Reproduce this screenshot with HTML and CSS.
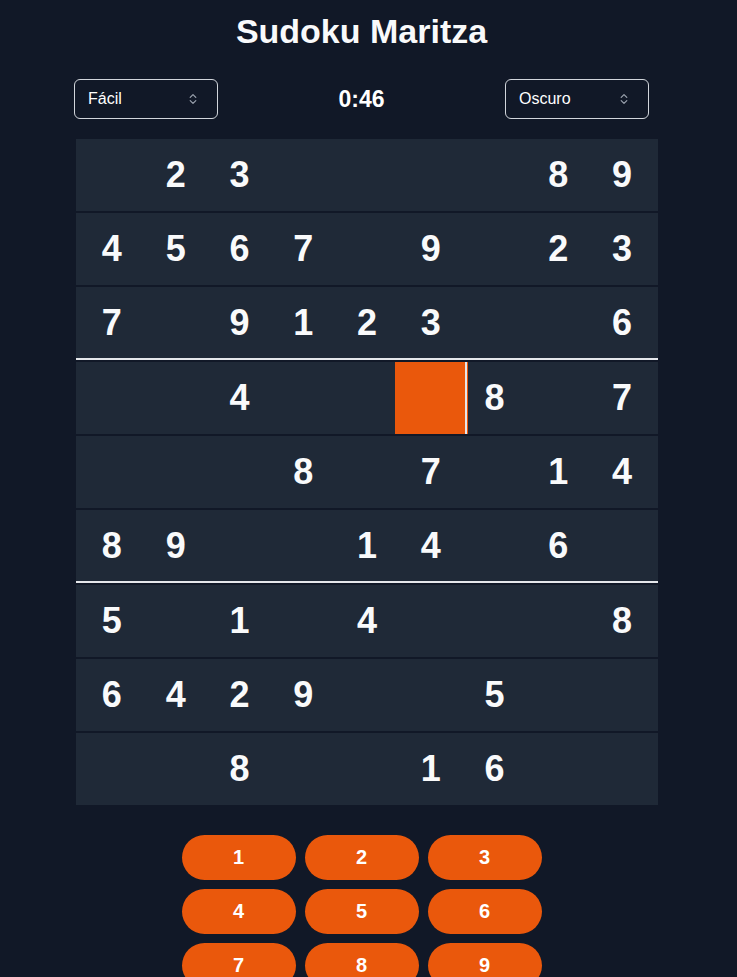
FILE: index.html
```html
<!DOCTYPE html>
<html lang="es">
<head>
<meta charset="utf-8">
<title>Sudoku Maritza</title>
<link rel="stylesheet" href="styles.css">
</head>
<body>
<main class="app">
  <h1 class="title">Sudoku Maritza</h1>
  <div class="controls">
    <div class="select">
      <span>Fácil</span>
      <svg class="chev" width="8" height="12" viewBox="0 0 8 12" aria-hidden="true"><path d="M1.2 4.4 L4 1.6 L6.8 4.4 M1.2 7.6 L4 10.4 L6.8 7.6" fill="none" stroke="#9ca3af" stroke-width="1.2" stroke-linecap="round" stroke-linejoin="round"/></svg>
    </div>
    <div class="timer">0:46</div>
    <div class="select">
      <span>Oscuro</span>
      <svg class="chev" width="8" height="12" viewBox="0 0 8 12" aria-hidden="true"><path d="M1.2 4.4 L4 1.6 L6.8 4.4 M1.2 7.6 L4 10.4 L6.8 7.6" fill="none" stroke="#9ca3af" stroke-width="1.2" stroke-linecap="round" stroke-linejoin="round"/></svg>
    </div>
  </div>
  <div class="board">
    <div class="row"><div class="cell"></div><div class="cell">2</div><div class="cell">3</div><div class="cell"></div><div class="cell"></div><div class="cell"></div><div class="cell"></div><div class="cell">8</div><div class="cell">9</div></div>
    <div class="row"><div class="cell">4</div><div class="cell">5</div><div class="cell">6</div><div class="cell">7</div><div class="cell"></div><div class="cell">9</div><div class="cell"></div><div class="cell">2</div><div class="cell">3</div></div>
    <div class="row box-end"><div class="cell">7</div><div class="cell"></div><div class="cell">9</div><div class="cell">1</div><div class="cell">2</div><div class="cell">3</div><div class="cell"></div><div class="cell"></div><div class="cell">6</div></div>
    <div class="row"><div class="cell"></div><div class="cell"></div><div class="cell">4</div><div class="cell"></div><div class="cell"></div><div class="cell selected"></div><div class="cell">8</div><div class="cell"></div><div class="cell">7</div></div>
    <div class="row"><div class="cell"></div><div class="cell"></div><div class="cell"></div><div class="cell">8</div><div class="cell"></div><div class="cell">7</div><div class="cell"></div><div class="cell">1</div><div class="cell">4</div></div>
    <div class="row box-end"><div class="cell">8</div><div class="cell">9</div><div class="cell"></div><div class="cell"></div><div class="cell">1</div><div class="cell">4</div><div class="cell"></div><div class="cell">6</div><div class="cell"></div></div>
    <div class="row"><div class="cell">5</div><div class="cell"></div><div class="cell">1</div><div class="cell"></div><div class="cell">4</div><div class="cell"></div><div class="cell"></div><div class="cell"></div><div class="cell">8</div></div>
    <div class="row"><div class="cell">6</div><div class="cell">4</div><div class="cell">2</div><div class="cell">9</div><div class="cell"></div><div class="cell"></div><div class="cell">5</div><div class="cell"></div><div class="cell"></div></div>
    <div class="row"><div class="cell"></div><div class="cell"></div><div class="cell">8</div><div class="cell"></div><div class="cell"></div><div class="cell">1</div><div class="cell">6</div><div class="cell"></div><div class="cell"></div></div>
  </div>
  <div class="pad">
    <button class="key">1</button>
    <button class="key">2</button>
    <button class="key">3</button>
    <button class="key">4</button>
    <button class="key">5</button>
    <button class="key">6</button>
    <button class="key">7</button>
    <button class="key">8</button>
    <button class="key">9</button>
  </div>
</main>
</body>
</html>
```

FILE: styles.css
```css
html, body {
  margin: 0;
  padding: 0;
  background: #111827;
}

body {
  font-family: "Liberation Sans", Arial, sans-serif;
  color: #f9fafb;
  overflow: hidden;
}

.app {
  width: 575px;
  margin-left: 74px;
  padding-top: 11px;
  display: flex;
  flex-direction: column;
  align-items: center;
}

.title {
  margin: 0;
  font-size: 34px;
  line-height: 40px;
  font-weight: 700;
  color: #f9fafb;
}

.controls {
  margin-top: 28px;
  width: 575px;
  display: flex;
  justify-content: space-between;
  align-items: center;
}

.select {
  box-sizing: border-box;
  width: 144px;
  height: 40px;
  border: 1px solid #d1d5db;
  border-radius: 6px;
  padding: 0 20px 0 13px;
  display: flex;
  align-items: center;
  justify-content: space-between;
  font-size: 16px;
  color: #ffffff;
}

.chev {
  display: block;
}

.timer {
  font-size: 23px;
  font-weight: 700;
  color: #ffffff;
}

.board {
  align-self: flex-start;
  margin-left: 2px;
  margin-top: 20px;
  width: 582px;
  display: flex;
  flex-direction: column;
  gap: 2px;
}

.row {
  box-sizing: border-box;
  height: 72px;
  padding: 0 4px;
  background: #1f2937;
  display: grid;
  grid-template-columns: repeat(9, 1fr);
}

.row.box-end {
  height: 73px;
  border-bottom: 2px solid #e5e7eb;
}

.cell {
  display: flex;
  align-items: center;
  justify-content: center;
  font-size: 36px;
  font-weight: 700;
  color: #f9fafb;
}

.cell.selected {
  margin: 0 -5px 0 -4px;
  background: #ea580c;
  box-shadow: inset -1px 0 0 #ea580c, inset -3px 0 0 #e5e7eb;
}

.pad {
  margin-top: 30px;
  display: grid;
  grid-template-columns: repeat(3, 114px);
  grid-auto-rows: 45px;
  gap: 9px;
}

.key {
  border: none;
  border-radius: 9999px;
  background: #ea580c;
  color: #ffffff;
  font-family: "Liberation Sans", Arial, sans-serif;
  font-size: 20px;
  font-weight: 700;
  padding: 0;
}
```
